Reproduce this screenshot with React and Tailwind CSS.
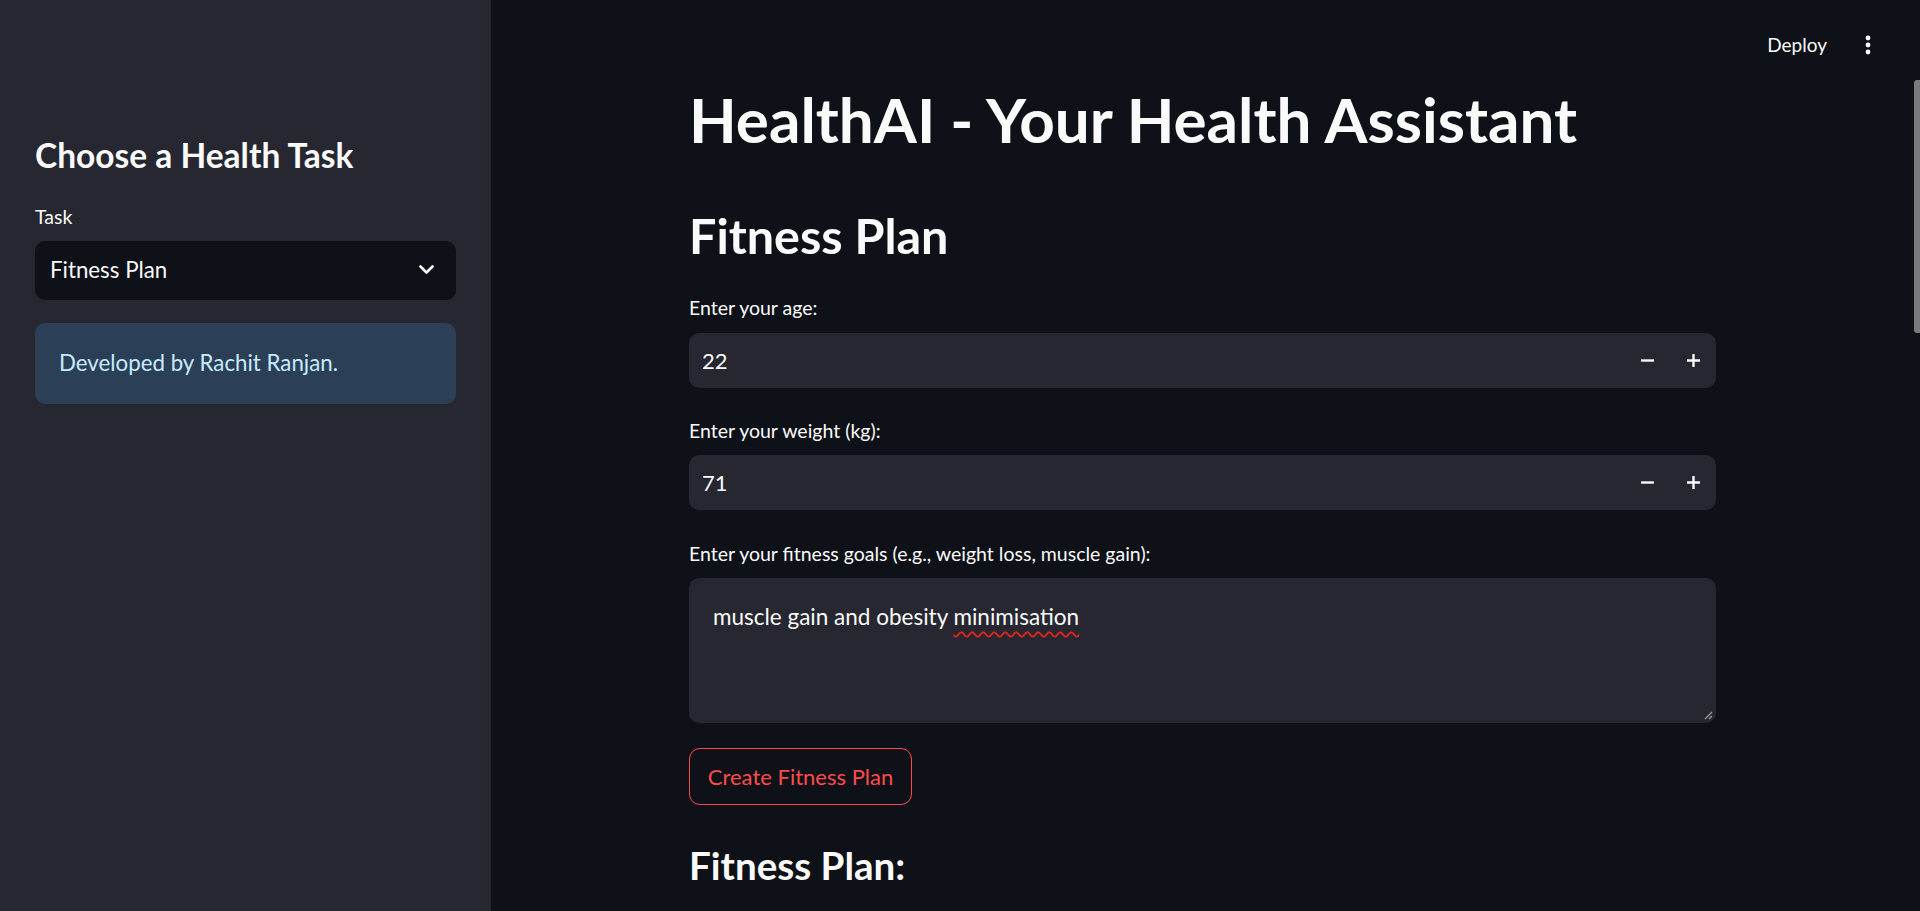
const font = { fontFamily: "Lato, 'Noto Sans', sans-serif" };

function Label({ children }) {
  return (
    <div className="text-[19.5px] leading-[1.2] text-[#fafafa]" style={font}>
      {children}
    </div>
  );
}

function NumberInput({ value }) {
  return (
    <div className="flex h-[55px] w-full items-center rounded-[10px] bg-[#262730]">
      <span className="flex-1 pl-[13px] text-[22px] text-[#fafafa]" style={font}>
        {value}
      </span>
      <div className="flex h-full items-center">
        <button className="flex h-full w-[46px] items-center justify-center">
          <svg width="13" height="13" viewBox="0 0 13 13">
            <path d="M0 6.5H13" stroke="#fafafa" strokeWidth="2.4" />
          </svg>
        </button>
        <button className="flex h-full w-[46px] items-center justify-center">
          <svg width="13" height="13" viewBox="0 0 13 13">
            <path d="M0 6.5H13M6.5 0V13" stroke="#fafafa" strokeWidth="2.4" />
          </svg>
        </button>
      </div>
    </div>
  );
}

export default function App() {
  return (
    <div className="flex h-[911px] w-[1920px] overflow-hidden bg-[#0e1117]" style={font}>
      {/* Sidebar */}
      <aside className="h-full w-[491px] shrink-0 bg-[#262730] px-[35px] pt-[135px]">
        <h2 className="text-[33.5px] font-bold leading-[1.2] text-[#fafafa]">Choose a Health Task</h2>
        <div className="mt-[30px]">
          <Label>Task</Label>
        </div>
        <div className="mt-[12px] flex h-[59px] w-[421px] items-center justify-between rounded-[10px] bg-[#0e1117] pl-[15px] pr-[22px]">
          <span className="text-[22.3px] text-[#fafafa]">Fitness Plan</span>
          <svg width="15" height="10" viewBox="0 0 15 10">
            <path d="M1.5 1.5L7.5 7.5L13.5 1.5" fill="none" stroke="#fafafa" strokeWidth="2.6" strokeLinecap="round" strokeLinejoin="round" />
          </svg>
        </div>
        <div className="mt-[23px] flex h-[81px] w-[421px] items-center rounded-[10px] bg-[#2b3f57] pl-[24px]">
          <span className="text-[22.3px] text-[#c7ebff]">Developed by Rachit Ranjan.</span>
        </div>
      </aside>

      {/* Main */}
      <main className="relative h-full flex-1 pl-[198px]">
        {/* Header */}
        <div className="absolute right-[49px] top-[31px] flex items-center gap-[38px]">
          <span className="text-[19px] text-[#fafafa]">Deploy</span>
          <svg width="6" height="20" viewBox="0 0 6 20">
            <circle cx="3" cy="3" r="2.4" fill="#fafafa" />
            <circle cx="3" cy="10" r="2.4" fill="#fafafa" />
            <circle cx="3" cy="17" r="2.4" fill="#fafafa" />
          </svg>
        </div>
        {/* Scrollbar thumb */}
        <div className="absolute right-0 top-[80px] h-[253px] w-[6px] rounded-l-[3px] bg-[#7a7a7e]" />

        <div className="w-[1027px] pt-[82px]">
          <h1 className="text-[62px] font-bold leading-[1.2] text-[#fafafa]">HealthAI - Your Health Assistant</h1>
          <h2 className="mt-[50px] text-[48.5px] font-bold leading-[1.2] text-[#fafafa]">Fitness Plan</h2>

          <div className="mt-[31px] mb-[14px]">
            <Label>Enter your age:</Label>
          </div>
          <NumberInput value="22" />

          <div className="mt-[31px] mb-[13px]">
            <Label>Enter your weight (kg):</Label>
          </div>
          <NumberInput value="71" />

          <div className="mt-[32px] mb-[12px]">
            <Label>Enter your fitness goals (e.g., weight loss, muscle gain):</Label>
          </div>
          <div className="relative h-[145px] w-full rounded-[10px] bg-[#262730] pl-[24px] pt-[21px]">
            <p className="text-[22.5px] leading-[1.6] text-[#fafafa]">
              muscle gain and obesity{" "}
              <span className="underline decoration-[#e0241b] decoration-wavy decoration-[1.5px] underline-offset-[6px]">
                minimisation
              </span>
            </p>
            <svg className="absolute bottom-[3px] right-[3px]" width="10" height="10" viewBox="0 0 10 10">
              <path d="M9 2L2 9M9 6L6 9" stroke="#9a9a9a" strokeWidth="1.3" />
            </svg>
          </div>

          <button className="mt-[25px] flex h-[57px] w-[223px] items-center justify-center rounded-[11px] border border-[#ff4b4b] text-[22px] text-[#ff4b4b]">
            Create Fitness Plan
          </button>

          <h3 className="mt-[37px] text-[38.6px] font-bold leading-[1.2] text-[#fafafa]">Fitness Plan:</h3>
        </div>
      </main>
    </div>
  );
}
